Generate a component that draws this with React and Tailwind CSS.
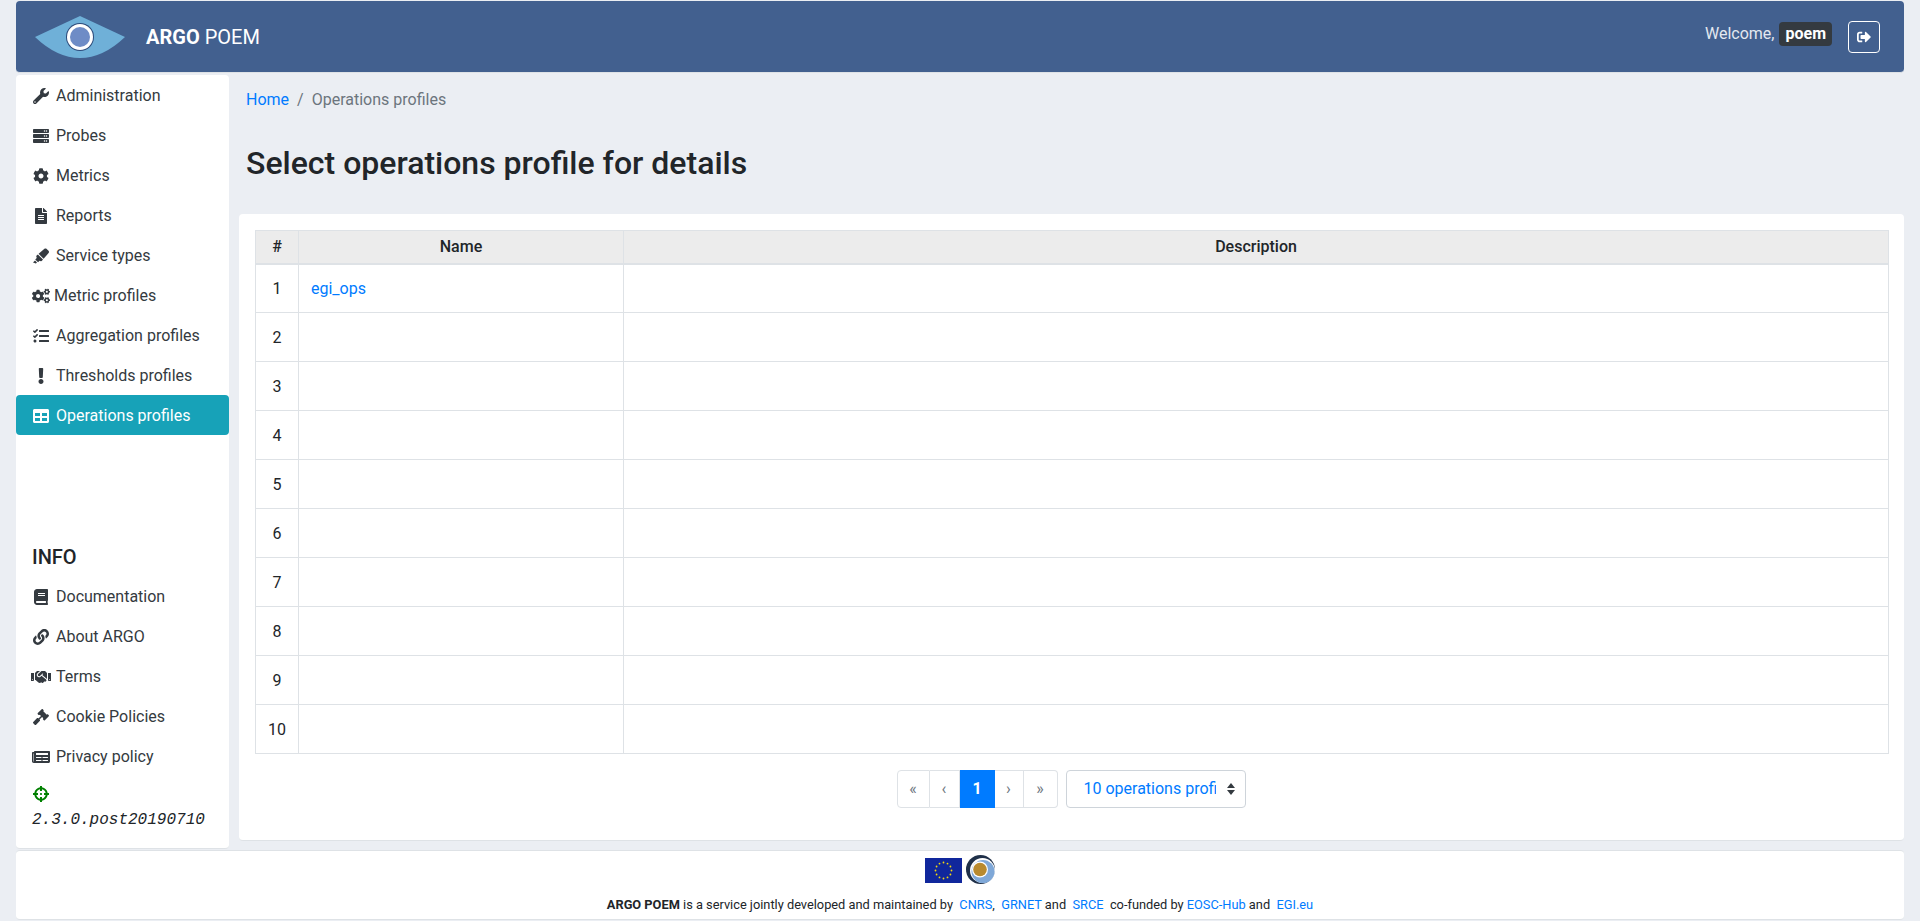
import React from "react";
import {
  FaWrench, FaServer, FaCog, FaFileAlt, FaHighlighter, FaCogs, FaTasks, FaExclamation, FaTable,
  FaBook, FaLink, FaHandshake, FaGavel, FaNewspaper, FaCrosshairs, FaSignOutAlt,
} from "react-icons/fa";

const MENU = [
  { label: "Administration", Icon: FaWrench },
  { label: "Probes", Icon: FaServer },
  { label: "Metrics", Icon: FaCog },
  { label: "Reports", Icon: FaFileAlt },
  { label: "Service types", Icon: FaHighlighter },
  { label: "Metric profiles", Icon: FaCogs, iconClass: "h-4 w-[18px] shrink-0", labelClass: "ml-[5px]" },
  { label: "Aggregation profiles", Icon: FaTasks },
  { label: "Thresholds profiles", Icon: FaExclamation },
  { label: "Operations profiles", Icon: FaTable, active: true },
];

const INFO = [
  { label: "Documentation", Icon: FaBook },
  { label: "About ARGO", Icon: FaLink },
  { label: "Terms", Icon: FaHandshake, iconClass: "h-4 w-5 shrink-0" },
  { label: "Cookie Policies", Icon: FaGavel },
  { label: "Privacy policy", Icon: FaNewspaper, iconClass: "h-4 w-[18px] shrink-0" },
];

const ROWS = [1, 2, 3, 4, 5, 6, 7, 8, 9, 10];

function EyeLogo() {
  return (
    <svg width="90" height="42" viewBox="0 0 90 42">
      <path d="M0 21 L45 0 L90 21 Q68 42 45 42 Q22 42 0 21 Z" fill="#6fb0d8" />
      <circle cx="45" cy="21" r="14" fill="#2c4a7a" />
      <circle cx="45" cy="21" r="13" fill="#ffffff" />
      <circle cx="45" cy="21" r="10" fill="#6e8cc6" />
    </svg>
  );
}

function EuFlag() {
  const stars = [];
  for (let i = 0; i < 12; i++) {
    const a = (i * Math.PI) / 6;
    stars.push(<circle key={i} cx={18.5 + Math.sin(a) * 8} cy={12.5 - Math.cos(a) * 8} r="0.9" fill="#f5d90a" />);
  }
  return (
    <svg width="37" height="25" viewBox="0 0 37 25">
      <rect width="37" height="25" fill="#10279c" />
      {stars}
    </svg>
  );
}

function EgiLogo() {
  return (
    <svg width="30" height="30" viewBox="0 0 30 30">
      <circle cx="14.5" cy="14.5" r="14.5" fill="#1f3049" />
      <circle cx="16.5" cy="15.5" r="12.5" fill="#ffffff" />
      <circle cx="17" cy="16.5" r="11.5" fill="#7fa8d8" />
      <circle cx="14" cy="14.5" r="8" fill="#ffffff" />
      <circle cx="14" cy="14.5" r="6.8" fill="#b98a2e" />
    </svg>
  );
}

function SideItem({ item }) {
  const { label, Icon, iconClass, labelClass, active } = item;
  return (
    <div className={`flex h-10 items-center rounded pl-[17px] pt-px ${active ? "bg-[#17a2b8] text-white" : "text-[#343a40]"}`}>
      <span className="flex w-4 shrink-0 items-center justify-center">
        <Icon className={iconClass || "h-4 w-4 shrink-0"} />
      </span>
      <span className={labelClass || "ml-[7px]"}>{label}</span>
    </div>
  );
}

export default function App() {
  return (
    <div className="flex h-[921px] flex-col overflow-hidden bg-[#ebeef3] px-4 pt-px font-['Roboto',sans-serif] text-base text-[#212529]">
      {/* Header */}
      <header className="flex h-[72px] shrink-0 items-center rounded border-b border-[#dee2e6] bg-[#42608f] pl-[19px] pr-[24px] text-white">
        <EyeLogo />
        <div className="ml-[21px] text-[20px]">
          <span className="font-bold">ARGO</span> POEM
        </div>
        <div className="ml-auto flex items-center">
          <span className="mb-[5px] text-[#e3e8f0]">Welcome,</span>
          <span className="mb-[5px] ml-[5px] flex h-6 items-center rounded bg-[#343a40] px-[6px] font-bold">poem</span>
          <button className="ml-4 flex h-8 w-8 items-center justify-center rounded border border-white">
            <FaSignOutAlt className="h-[14px] w-[14px]" />
          </button>
        </div>
      </header>

      <div className="mt-[2px] flex h-[774px] shrink-0">
        {/* Sidebar */}
        <aside className="flex w-[213px] shrink-0 flex-col justify-between rounded border-b border-[#dee2e6] bg-white">
          <nav>
            {MENU.map((item) => (
              <SideItem key={item.label} item={item} />
            ))}
          </nav>
          <div className="pb-[16px]">
            <div className="mb-[7px] pl-4 text-[20px] font-medium leading-6">INFO</div>
            {INFO.map((item) => (
              <SideItem key={item.label} item={item} />
            ))}
            <div className="pl-4 pt-[10px]">
              <FaCrosshairs className="ml-px h-4 w-4 text-[#008000]" />
              <div className="mt-[6px] font-['Liberation_Mono',monospace] italic leading-6">2.3.0.post20190710</div>
            </div>
          </div>
        </aside>

        {/* Main */}
        <main className="min-w-0 flex-1 pl-[10px]">
          <div className="flex h-[50px] items-center pl-[7px]">
            <a className="text-[#007bff]">Home</a>
            <span className="px-2 text-[#6c757d]">/</span>
            <span className="text-[#6c757d]">Operations profiles</span>
          </div>
          <h3 className="mt-[19px] pl-[7px] text-[32px] font-medium leading-[38px]">Select operations profile for details</h3>
          <div className="mt-[32px] h-[627px] rounded border-b border-[#dee2e6] bg-white pl-4 pr-[15px] pt-4">
            <table className="w-full table-fixed border-collapse border border-[#dee2e6]">
              <colgroup>
                <col className="w-[43px]" />
                <col className="w-[325px]" />
                <col />
              </colgroup>
              <thead>
                <tr className="h-[33px] border-b-2 border-[#dee2e6] bg-[#ececec] font-medium">
                  <th className="border-r border-[#dee2e6] font-medium">#</th>
                  <th className="border-r border-[#dee2e6] font-medium">Name</th>
                  <th className="font-medium">Description</th>
                </tr>
              </thead>
              <tbody>
                {ROWS.map((n) => (
                  <tr key={n} className="h-[49px] border-b border-[#dee2e6]">
                    <td className="border-r border-[#dee2e6] pt-px text-center">{n}</td>
                    <td className="border-r border-[#dee2e6] px-3 pt-px text-[#007bff]">{n === 1 ? "egi_ops" : ""}</td>
                    <td />
                  </tr>
                ))}
              </tbody>
            </table>
            {/* Pagination */}
            <div className="mt-4 flex justify-center pr-[2px]">
              <div className="flex h-[38px] items-stretch text-[#6c757d]">
                <span className="flex w-[33px] items-center justify-center rounded-l border border-[#dee2e6]">«</span>
                <span className="flex w-[30px] items-center justify-center border-y border-r border-[#dee2e6]">‹</span>
                <span className="flex w-[35px] items-center justify-center bg-[#007bff] font-bold text-white">1</span>
                <span className="flex w-[29px] items-center justify-center border-y border-r border-[#dee2e6]">›</span>
                <span className="flex w-[34px] items-center justify-center rounded-r border-y border-r border-[#dee2e6]">»</span>
              </div>
              <div className="ml-2 flex h-[38px] w-[180px] items-center rounded border border-[#ced4da] pl-[17px] pr-[10px] text-[#007bff]">
                <select className="w-[132px] appearance-none bg-transparent outline-none">
                  <option>10 operations profiles</option>
                </select>
                <svg className="ml-auto" width="8" height="12" viewBox="0 0 8 12" fill="#343a40">
                  <path d="M4 0 L8 5 L0 5 Z M0 7 L8 7 L4 12 Z" />
                </svg>
              </div>
            </div>
          </div>
        </main>
      </div>

      {/* Footer */}
      <footer className="mt-px flex h-[70px] shrink-0 flex-col items-center rounded border-y border-[#dee2e6] bg-white">
        <div className="mt-[4px] flex h-[30px] items-center gap-[4px]">
          <EuFlag />
          <EgiLogo />
        </div>
        <p className="mt-[11px] text-[12.8px] leading-[18px]">
          <span className="font-bold">ARGO POEM</span> is a service jointly developed and maintained by&nbsp;{" "}
          <a className="text-[#007bff]">CNRS</a>,&nbsp; <a className="text-[#007bff]">GRNET</a> and&nbsp;{" "}
          <a className="text-[#007bff]">SRCE</a>&nbsp; co-funded by <a className="text-[#007bff]">EOSC-Hub</a> and&nbsp;{" "}
          <a className="text-[#007bff]">EGI.eu</a>
        </p>
      </footer>
    </div>
  );
}
